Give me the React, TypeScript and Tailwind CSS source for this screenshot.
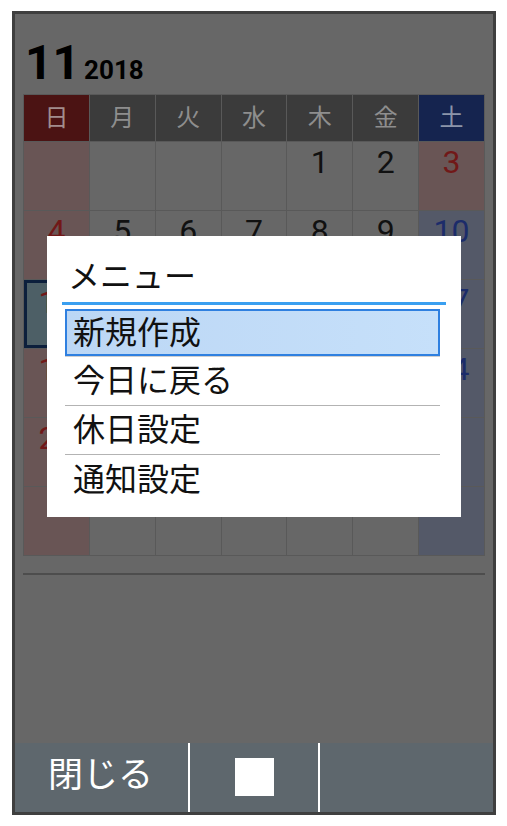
import React from 'react';

const FONT = { fontFamily: "Roboto, 'Noto Sans CJK JP', sans-serif" };

const weekdays = ['日', '月', '火', '水', '木', '金', '土'];

const weeks: (number | null)[][] = [
  [null, null, null, null, 1, 2, 3],
  [4, 5, 6, 7, 8, 9, 10],
  [11, 12, 13, 14, 15, 16, 17],
  [18, 19, 20, 21, 22, 23, 24],
  [25, 26, 27, 28, 29, 30, null],
  [null, null, null, null, null, null, null],
];

// 文化の日, 勤労感謝の日
const holidays = [3, 23];

const menuItems = ['今日に戻る', '休日設定', '通知設定'];

function headerClass(i: number) {
  if (i === 0) return 'bg-[#4b1313] text-[#a28d8d]';
  if (i === 6) return 'bg-[#15244f] text-[#8c95aa]';
  return 'bg-[#3b3b3b] text-[#8e8e8e]';
}

function cellClass(i: number, day: number | null) {
  if (day === 11) return 'bg-[#4d5f66] border-[3px] border-[#0c1f3c] text-[#701818]';
  if (i === 0 || (day !== null && holidays.includes(day))) return 'bg-[#695555] text-[#711818]';
  if (i === 6) return 'bg-[#545968] text-[#1c2c6a]';
  return 'bg-[#676767] text-[#111111]';
}

export default function App() {
  return (
    <div className="w-[507px] h-[826px] bg-white pt-[11px] pl-[12px]" style={FONT}>
      <div className="relative w-[484px] h-[804px] border-[3px] border-[#3f3f3f] bg-[#676767] flex flex-col">
        <div className="h-[80px] pl-[10px] pt-[25px] flex items-baseline gap-[4px] text-black font-bold">
          <span className="text-[48px] leading-none">11</span>
          <span className="text-[26px] leading-none">2018</span>
        </div>

        <div className="ml-[8px] w-[462px] grid grid-cols-7 gap-px p-px bg-[#595959]">
          {weekdays.map((d, i) => (
            <div key={d} className={`h-[46px] flex items-center justify-center text-[24px] ${headerClass(i)}`}>
              {d}
            </div>
          ))}
          {weeks.map((week, r) =>
            week.map((day, i) => (
              <div
                key={`${r}-${i}`}
                className={`h-[68px] flex justify-center text-[32px] leading-[38px] ${day === 11 ? 'pt-0' : 'pt-px'} ${cellClass(i, day)}`}
              >
                {day ?? ''}
              </div>
            ))
          )}
        </div>

        <div className="mt-[17px] ml-[8px] w-[462px] h-[2px] bg-[#4d4d4d]" />

        <div className="flex-1" />

        <div className="h-[69px] bg-[#5e676d] flex">
          <div className="w-[173px] flex items-center justify-center text-white text-[35px] pb-[2px] pr-[2px]">
            閉じる
          </div>
          <div className="w-[2px] bg-white" />
          <div className="w-[128px] flex items-center justify-center pb-[2px]">
            <div className="w-[39px] h-[38px] bg-white" />
          </div>
          <div className="w-[2px] bg-white" />
          <div className="flex-1" />
        </div>

        <div className="absolute left-[32px] top-[222px] w-[414px] h-[281px] bg-white">
          <div className="pt-[22px] pb-[6px] pl-[21px] text-[32px] leading-[38px] text-[#111]">メニュー</div>
          <div className="mx-[15px] h-[3px] bg-[#3a9ff0]" />
          <div className="mt-[4px] ml-[18px] w-[375px] text-[32px] text-[#111]">
            <div className="h-[47px] border-2 border-[#2f80e0] bg-gradient-to-r from-[#bcd7f5] to-[#c6e0fa] flex items-center pl-[6px] leading-none">
              新規作成
            </div>
            <div className="h-px bg-[#cfcfcf]" />
            {menuItems.map((item, i) => (
              <div
                key={item}
                className={`h-[49px] flex items-center pl-[8px] leading-none ${i < menuItems.length - 1 ? 'border-b border-[#b3b3b3]' : ''}`}
              >
                {item}
              </div>
            ))}
          </div>
        </div>
      </div>
    </div>
  );
}
